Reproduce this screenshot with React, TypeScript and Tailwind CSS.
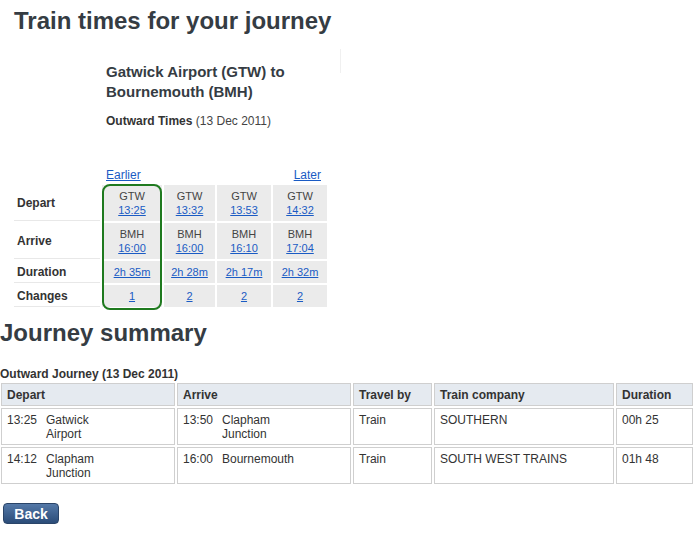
const times = [
  { from: "GTW", dep: "13:25", to: "BMH", arr: "16:00", dur: "2h 35m", changes: "1" },
  { from: "GTW", dep: "13:32", to: "BMH", arr: "16:00", dur: "2h 28m", changes: "2" },
  { from: "GTW", dep: "13:53", to: "BMH", arr: "16:10", dur: "2h 17m", changes: "2" },
  { from: "GTW", dep: "14:32", to: "BMH", arr: "17:04", dur: "2h 32m", changes: "2" },
];

const legs = [
  { depTime: "13:25", depStation: "Gatwick Airport", arrTime: "13:50", arrStation: "Clapham Junction", by: "Train", company: "SOUTHERN", duration: "00h 25" },
  { depTime: "14:12", depStation: "Clapham Junction", arrTime: "16:00", arrStation: "Bournemouth", by: "Train", company: "SOUTH WEST TRAINS", duration: "01h 48" },
];

const link = "text-[#1a5bc4] underline";

function Label({ text }: { text: string }) {
  return (
    <div className="flex items-center border-b border-[#e8e8e8] pl-[3px] font-bold text-[12px] text-[#333]">
      {text}
    </div>
  );
}

function Cell({ children }: { children: React.ReactNode }) {
  return (
    <div className="flex flex-col items-center justify-center bg-[#ebebeb] text-[11px] leading-[14px] text-[#444]">
      {children}
    </div>
  );
}

function Place({ time, station }: { time: string; station: string }) {
  return (
    <div className="flex">
      <span className="w-[39px] shrink-0">{time}</span>
      <span className="w-[80px]">{station}</span>
    </div>
  );
}

export default function App() {
  const th = "border border-[#cfcfcf] bg-[#e5eaf0] pl-[5px] pt-[4px] pb-[3px] text-left font-bold leading-[14px]";
  const td = "border border-[#cfcfcf] pl-[5px] pt-[4px] pb-[3px] align-top leading-[14px]";

  return (
    <div className="min-h-[536px] w-[700px] bg-white font-['Liberation_Sans',Arial,sans-serif] text-[12px] text-[#333]">
      <h1 className="pl-[14px] pt-[6px] text-[24px] font-bold leading-[30px] text-[#353c43]">
        Train times for your journey
      </h1>

      {/* Route header */}
      <div className="flex pl-[106px]">
        <div className="w-[234px] pt-[26px]">
          <h2 className="text-[15px] font-bold leading-[20px] text-[#353c43]">
            Gatwick Airport (GTW) to
            <br />
            Bournemouth (BMH)
          </h2>
          <p className="mt-[11px] leading-[16px] text-[#444]">
            <span className="font-bold text-[#333]">Outward Times</span> (13 Dec 2011)
          </p>
        </div>
        <div className="mt-[13px] h-[24px] w-px bg-[#f0f0f0]" />
      </div>

      {/* Times grid */}
      <div className="ml-[14px] mt-[39px] grid w-fit grid-cols-[86px_60px_51px_54px_54px] gap-x-[2px] leading-[14px]">
        <div />
        <a className={`${link} pl-[4px]`}>Earlier</a>
        <div />
        <div />
        <a className={`${link} text-right pr-[6px]`}>Later</a>
      </div>

      <div className="relative ml-[14px] mt-[3px] grid w-fit grid-cols-[86px_60px_51px_54px_54px] grid-rows-[36px_36px_22px_22px] gap-[2px]">
        <Label text="Depart" />
        {times.map((t) => (
          <Cell key={t.dep}>
            <span>{t.from}</span>
            <a className={link}>{t.dep}</a>
          </Cell>
        ))}
        <Label text="Arrive" />
        {times.map((t, i) => (
          <Cell key={i}>
            <span>{t.to}</span>
            <a className={link}>{t.arr}</a>
          </Cell>
        ))}
        <Label text="Duration" />
        {times.map((t) => (
          <Cell key={t.dur}>
            <a className={link}>{t.dur}</a>
          </Cell>
        ))}
        <Label text="Changes" />
        {times.map((t, i) => (
          <Cell key={i}>
            <a className={link}>{t.changes}</a>
          </Cell>
        ))}
        {/* selected journey highlight */}
        <div className="pointer-events-none absolute left-[88px] top-[-1px] h-[126px] w-[60px] rounded-[8px] border-2 border-[#1f7a1f]" />
      </div>

      <h1 className="mt-[11px] text-[24px] font-bold leading-[30px] text-[#353c43]">Journey summary</h1>

      <p className="mt-[19px] font-bold leading-[14px] text-[#333]">Outward Journey (13 Dec 2011)</p>

      <table className="-ml-px w-[695px] table-fixed border-separate border-spacing-[2px] text-[12px]">
        <thead>
          <tr>
            <th className={`${th} w-[174px]`}>Depart</th>
            <th className={`${th} w-[174px]`}>Arrive</th>
            <th className={`${th} w-[79px]`}>Travel by</th>
            <th className={`${th} w-[180px]`}>Train company</th>
            <th className={`${th} w-[77px]`}>Duration</th>
          </tr>
        </thead>
        <tbody>
          {legs.map((l) => (
            <tr key={l.depTime}>
              <td className={td}>
                <Place time={l.depTime} station={l.depStation} />
              </td>
              <td className={td}>
                <Place time={l.arrTime} station={l.arrStation} />
              </td>
              <td className={td}>{l.by}</td>
              <td className={td}>{l.company}</td>
              <td className={td}>{l.duration}</td>
            </tr>
          ))}
        </tbody>
      </table>

      <button className="ml-[3px] mt-[17px] h-[21px] w-[56px] rounded-[4px] border border-[#2a4468] bg-gradient-to-b from-[#5479a8] to-[#2b4c78] text-[14px] font-bold leading-[18px] text-white">
        Back
      </button>
    </div>
  );
}
